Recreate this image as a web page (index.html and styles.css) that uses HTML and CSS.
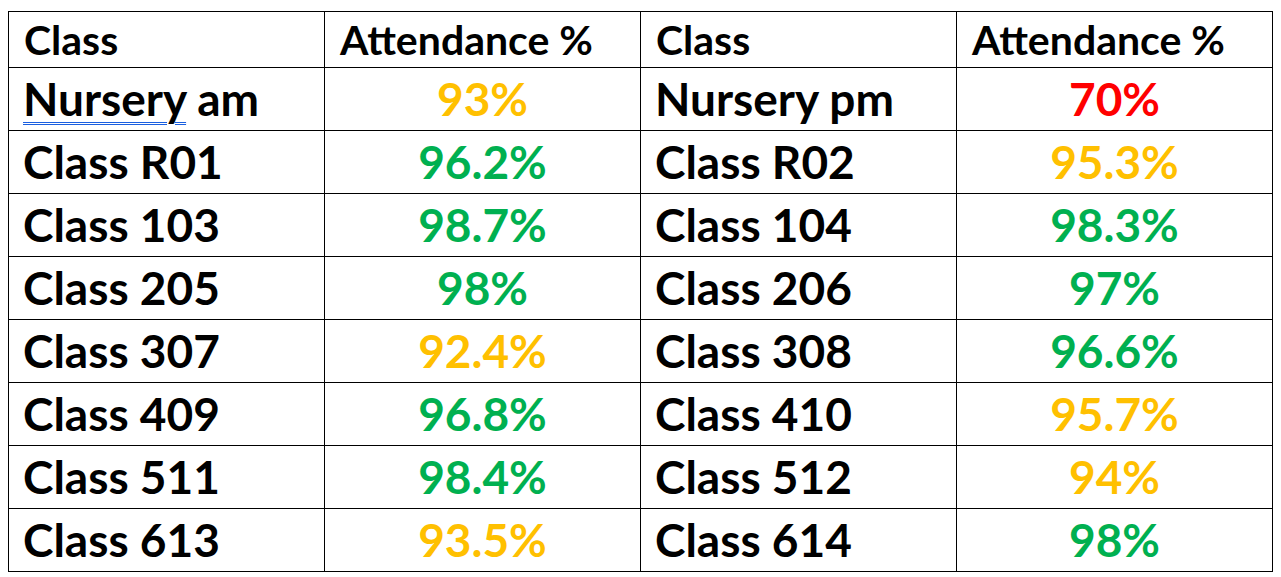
FILE: index.html
```html
<!DOCTYPE html>
<html>
<head>
<meta charset="utf-8">
<link rel="stylesheet" href="styles.css">
</head>
<body>
<table class="att">
  <colgroup><col class="c"><col class="c"><col class="c"><col class="c"></colgroup>
  <tr class="head">
    <td>Class</td><td>Attendance %</td><td>Class</td><td>Attendance %</td>
  </tr>
  <tr>
    <td class="name"><span class="spell">Nursery</span> am</td><td class="pct amber">93%</td>
    <td class="name">Nursery pm</td><td class="pct red">70%</td>
  </tr>
  <tr><td class="name">Class R01</td><td class="pct green">96.2%</td><td class="name">Class R02</td><td class="pct amber">95.3%</td></tr>
  <tr><td class="name">Class 103</td><td class="pct green">98.7%</td><td class="name">Class 104</td><td class="pct green">98.3%</td></tr>
  <tr><td class="name">Class 205</td><td class="pct green">98%</td><td class="name">Class 206</td><td class="pct green">97%</td></tr>
  <tr><td class="name">Class 307</td><td class="pct amber">92.4%</td><td class="name">Class 308</td><td class="pct green">96.6%</td></tr>
  <tr><td class="name">Class 409</td><td class="pct green">96.8%</td><td class="name">Class 410</td><td class="pct amber">95.7%</td></tr>
  <tr><td class="name">Class 511</td><td class="pct green">98.4%</td><td class="name">Class 512</td><td class="pct amber">94%</td></tr>
  <tr><td class="name">Class 613</td><td class="pct amber">93.5%</td><td class="name">Class 614</td><td class="pct green">98%</td></tr>
</table>
</body>
</html>
```
FILE: styles.css
```css
html, body { margin: 0; padding: 0; background: #fff; }
body { font-family: Lato, "Open Sans", sans-serif; font-weight: 700; color: #000; }
.att {
  border-collapse: collapse;
  table-layout: fixed;
  margin: 11px 0 0 8px;
  width: 1265px;
}
.att col.c { width: 316px; }
.att td {
  border: 1px solid #000;
  padding: 0 0 0 14px;
  height: 62px;
  font-size: 46px;
  line-height: 1;
  vertical-align: middle;
  white-space: nowrap;
  overflow: hidden;
}
.att tr.head td { height: 55px; font-size: 41px; padding-left: 15px; }
.att td.pct { text-align: center; padding: 0; }
.amber { color: #FFC000; }
.green { color: #00B050; }
.red { color: #FF0000; }
.spell {
  text-decoration: underline double #1a5fe0;
  text-decoration-thickness: 1px;
  text-underline-offset: 6px;
}
```
